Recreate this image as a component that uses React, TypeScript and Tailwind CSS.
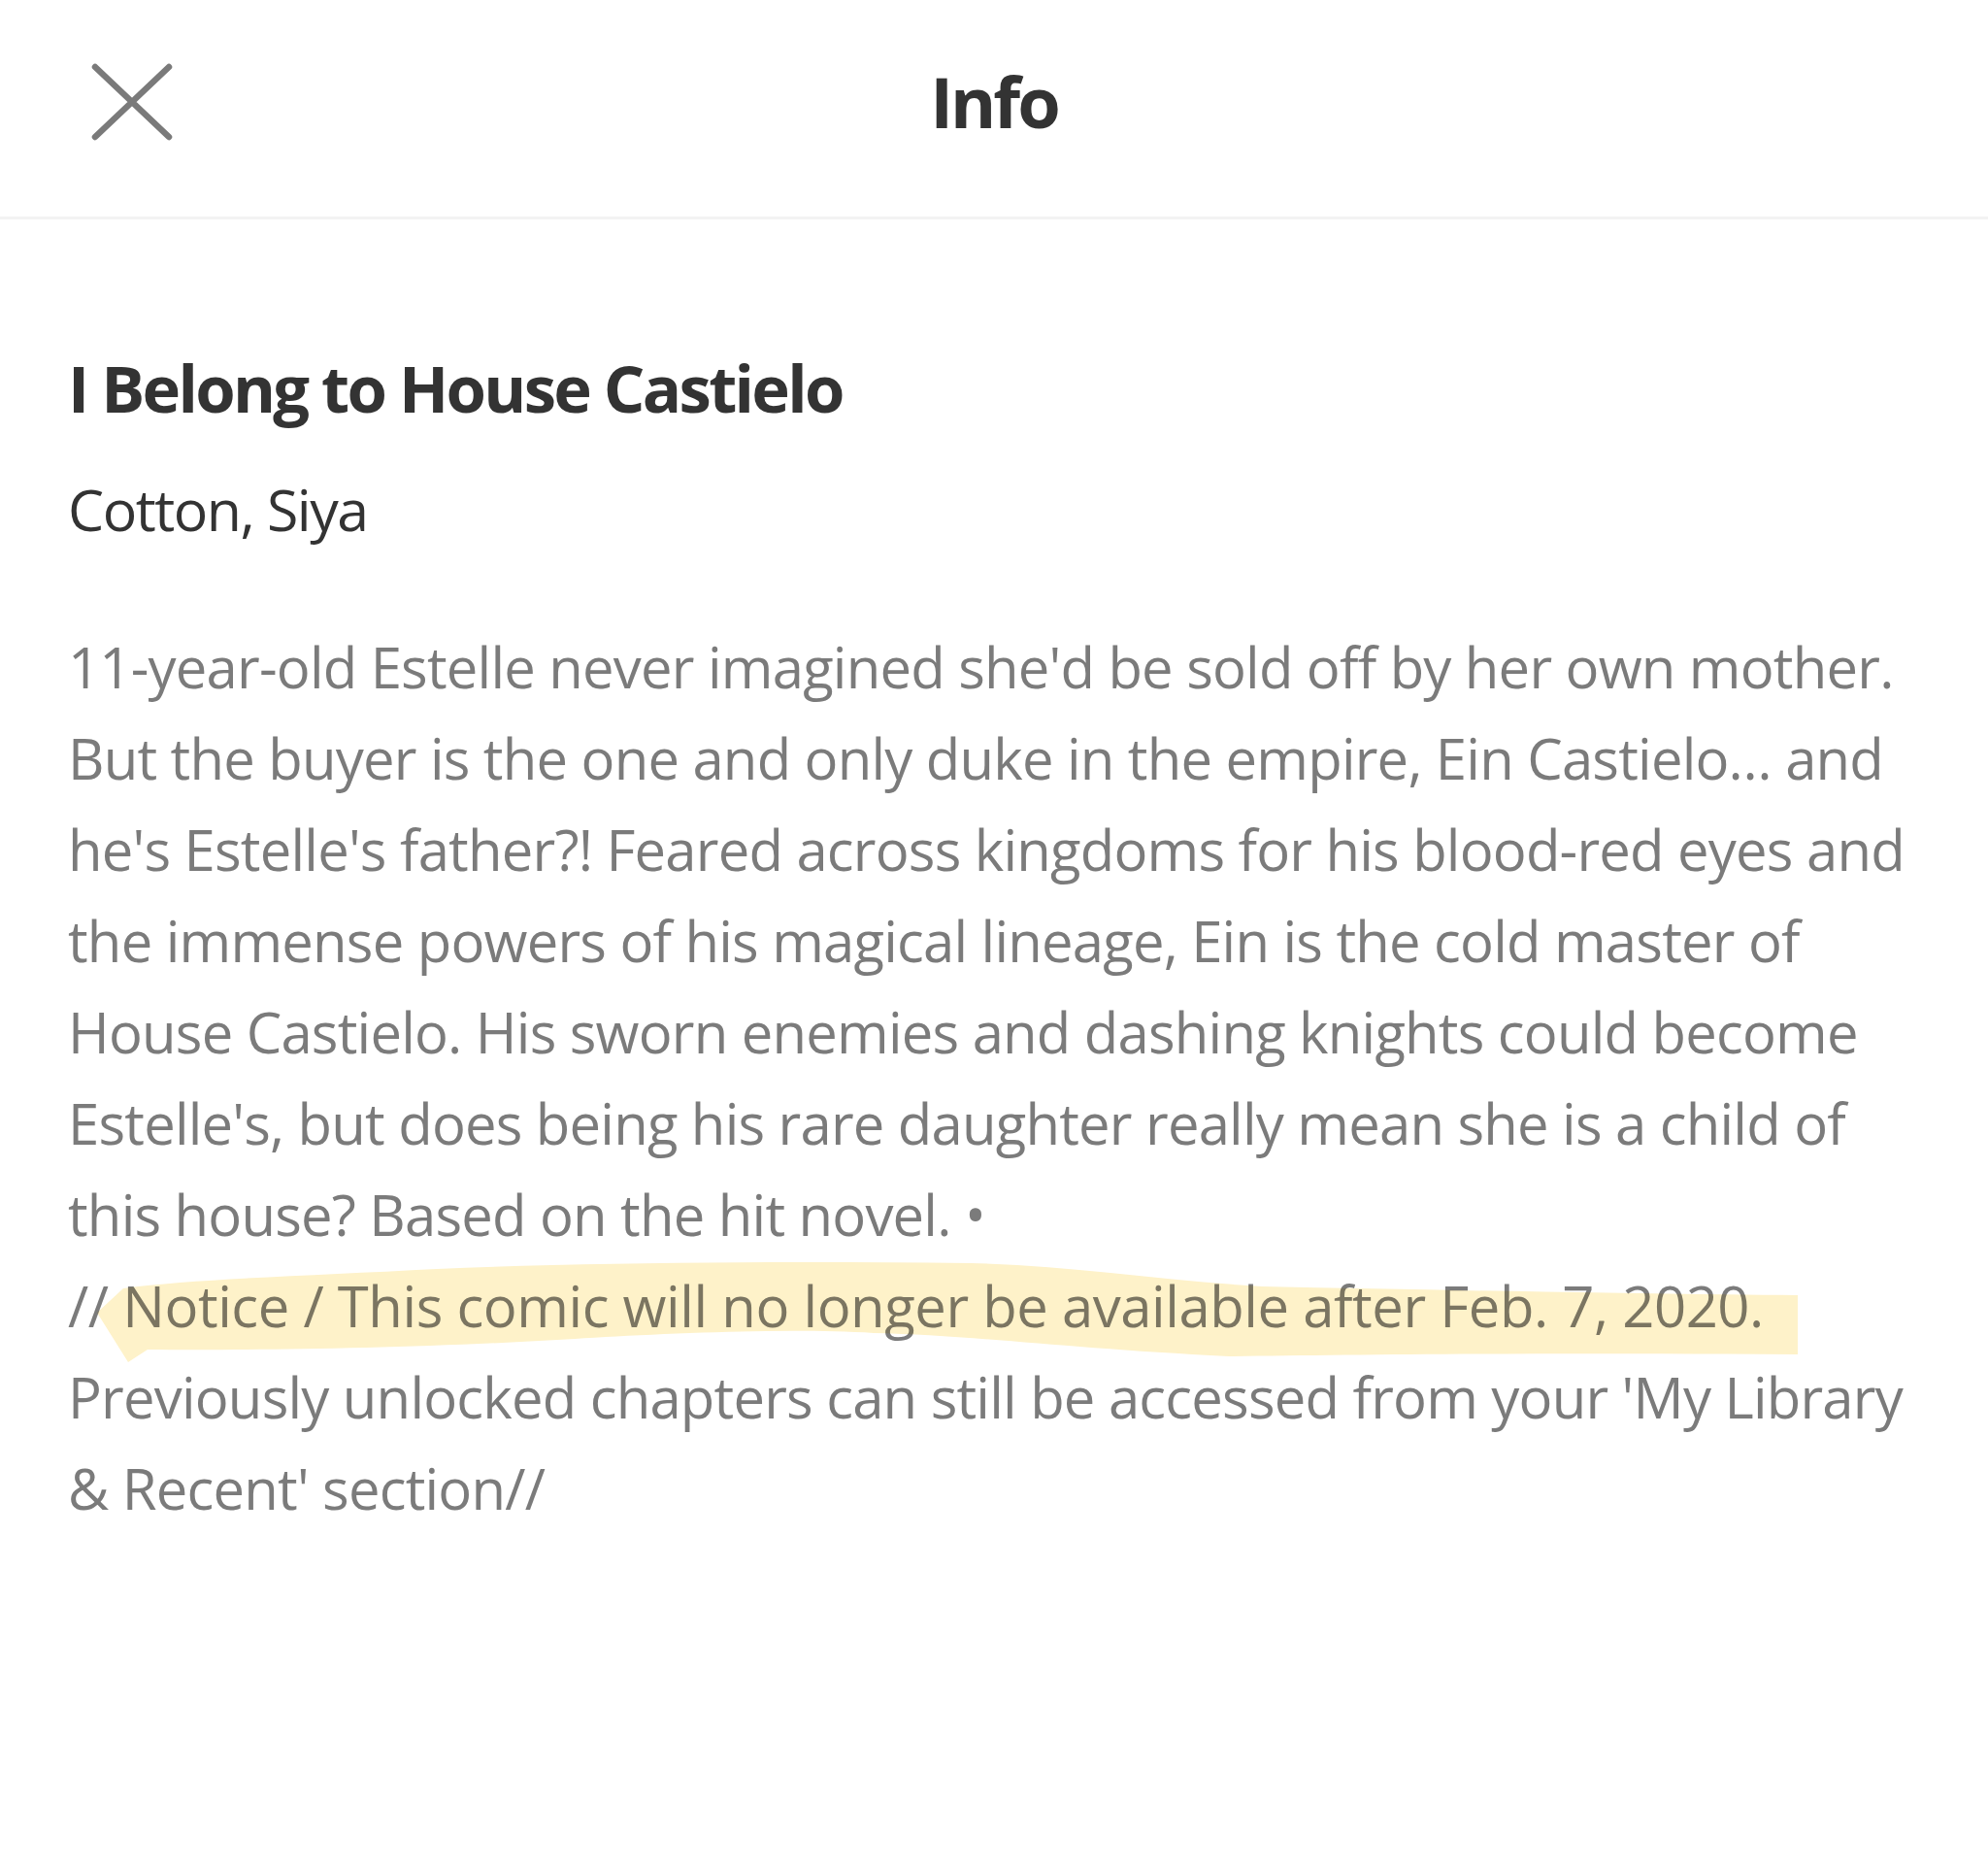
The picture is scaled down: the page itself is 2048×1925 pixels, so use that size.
const description = [
  "11-year-old Estelle never imagined she'd be sold off by her own mother.",
  "But the buyer is the one and only duke in the empire, Ein Castielo… and",
  "he's Estelle's father?! Feared across kingdoms for his blood-red eyes and",
  "the immense powers of his magical lineage, Ein is the cold master of",
  "House Castielo. His sworn enemies and dashing knights could become",
  "Estelle's, but does being his rare daughter really mean she is a child of",
  "this house? Based on the hit novel. •",
];

const notice = [
  "Previously unlocked chapters can still be accessed from your 'My Library",
  "& Recent' section//",
];

function CloseIcon() {
  return (
    <svg width="84" height="80" viewBox="0 0 84 80" fill="none">
      <path
        d="M4 4 L80 76 M80 4 L4 76"
        stroke="#7a7a7a"
        strokeWidth="6.5"
        strokeLinecap="round"
      />
    </svg>
  );
}

// hand-drawn marker stroke laid over the notice line
function Highlight() {
  return (
    <svg
      className="pointer-events-none absolute left-[30px] top-[-1px] mix-blend-multiply"
      width="1752"
      height="110"
      viewBox="0 0 1752 110"
    >
      <path
        d="M0 55 L27 30 C100 20, 219 17, 350 10 C512 3, 700 2, 900 4 C1000 6, 1100 22, 1200 28 C1400 32, 1600 36, 1752 37 L1752 98 C1500 96, 1300 98, 1166 100 C1000 92, 900 78, 800 76 C700 70, 550 78, 474 83 C320 92, 150 94, 52 93 L32 106 Z"
        fill="#fef2c9"
      />
    </svg>
  );
}

export default function App() {
  return (
    <div className="min-h-[1925px] bg-white font-['Open_Sans',sans-serif]">
      <header className="relative flex h-[226px] items-center justify-center border-b-[3px] border-[#f3f3f3]">
        <button className="absolute left-[94px] top-[65px]">
          <CloseIcon />
        </button>
        <h1 className="mt-[-15px] text-[72px] font-bold leading-none tracking-[-3px] text-[#333333]">Info</h1>
      </header>

      <main className="px-[70px] pt-[133px]">
        <h2 className="text-[67px] font-bold leading-[80px] tracking-[-2.7px] text-[#333333]">
          I Belong to House Castielo
        </h2>
        <p className="mt-[49px] text-[59px] leading-[72px] tracking-[-1.5px] text-[#333333]">Cotton, Siya</p>

        <div className="mt-[80px] whitespace-nowrap text-[58px] leading-[94px] tracking-[-0.8px] text-[#7b7b7b]">
          {description.map((line) => (
            <div key={line}>{line}</div>
          ))}
          <div className="relative">
            <span className="tracking-[-0.45px]">
              // Notice / This comic will no longer be available after Feb. 7, 2020.
            </span>
            <Highlight />
          </div>
          {notice.map((line) => (
            <div key={line}>{line}</div>
          ))}
        </div>
      </main>
    </div>
  );
}
